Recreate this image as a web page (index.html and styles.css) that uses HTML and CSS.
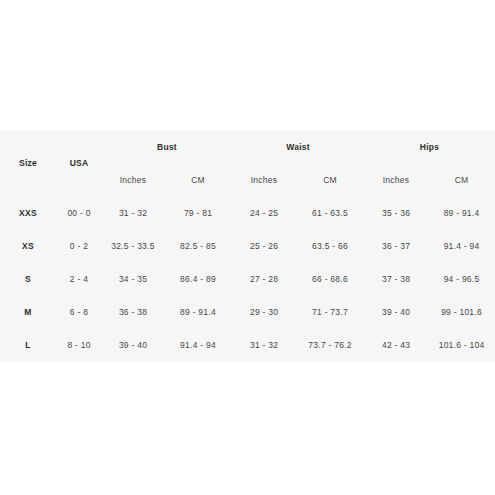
FILE: index.html
```html
<!DOCTYPE html>
<html>
<head>
<meta charset="utf-8">
<link rel="stylesheet" href="styles.css">
</head>
<body>
<section class="chart">
<table class="size-table">
  <colgroup>
    <col class="c-size"><col class="c-usa"><col class="c-bi"><col class="c-bc"><col class="c-wi"><col class="c-wc"><col class="c-hi"><col class="c-hc">
  </colgroup>
  <thead>
    <tr>
      <th rowspan="2">Size</th>
      <th rowspan="2">USA</th>
      <th colspan="2">Bust</th>
      <th colspan="2">Waist</th>
      <th colspan="2">Hips</th>
    </tr>
    <tr class="sub">
      <td>Inches</td><td>CM</td><td>Inches</td><td>CM</td><td>Inches</td><td>CM</td>
    </tr>
  </thead>
  <tbody>
    <tr><th>XXS</th><td>00 - 0</td><td>31 - 32</td><td>79 - 81</td><td>24 - 25</td><td>61 - 63.5</td><td>35 - 36</td><td>89 - 91.4</td></tr>
    <tr><th>XS</th><td>0 - 2</td><td>32.5 - 33.5</td><td>82.5 - 85</td><td>25 - 26</td><td>63.5 - 66</td><td>36 - 37</td><td>91.4 - 94</td></tr>
    <tr><th>S</th><td>2 - 4</td><td>34 - 35</td><td>86.4 - 89</td><td>27 - 28</td><td>66 - 68.6</td><td>37 - 38</td><td>94 - 96.5</td></tr>
    <tr><th>M</th><td>6 - 8</td><td>36 - 38</td><td>89 - 91.4</td><td>29 - 30</td><td>71 - 73.7</td><td>39 - 40</td><td>99 - 101.6</td></tr>
    <tr><th>L</th><td>8 - 10</td><td>39 - 40</td><td>91.4 - 94</td><td>31 - 32</td><td>73.7 - 76.2</td><td>42 - 43</td><td>101.6 - 104</td></tr>
  </tbody>
</table>
</section>
</body>
</html>
```

FILE: styles.css
```css
html, body {
  margin: 0;
  padding: 0;
  background: #ffffff;
}
body {
  width: 495px;
  height: 495px;
  overflow: hidden;
  font-family: "Liberation Sans", Arial, sans-serif;
}
.chart {
  margin-top: 130px;
  background: #f6f6f6;
  height: 232px;
}
.size-table {
  width: 495px;
  border-collapse: collapse;
  table-layout: fixed;
}
.c-size { width: 56px; }
.c-usa { width: 46px; }
.c-bi { width: 62px; }
.c-bc { width: 68px; }
.c-wi { width: 64px; }
.c-wc { width: 68px; }
.c-hi { width: 64px; }
.c-hc { width: 67px; }
.size-table th,
.size-table td {
  padding: 0;
  height: 33px;
  text-align: center;
  vertical-align: middle;
  font-size: 8.5px;
  letter-spacing: 0.25px;
  white-space: nowrap;
}
.size-table th {
  font-weight: bold;
  color: #2e2e2e;
}
.size-table td {
  color: #474747;
}
```
